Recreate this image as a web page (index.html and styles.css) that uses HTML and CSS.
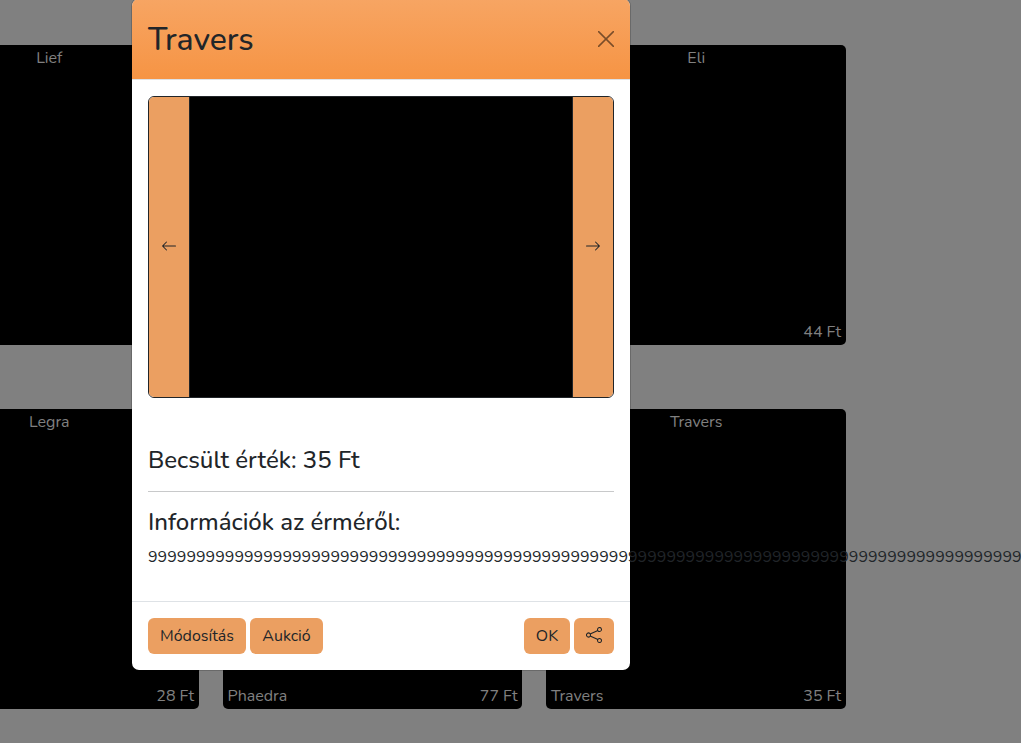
FILE: index.html
```html
<!DOCTYPE html>
<html lang="hu">
<head>
<meta charset="utf-8">
<title>Travers</title>
<link rel="stylesheet" href="styles.css">
</head>
<body>
<main class="gallery">
  <article class="coin"><h2 class="coin-title">Lief</h2></article>
  <article class="coin"></article>
  <article class="coin"><h2 class="coin-title">Eli</h2><div class="coin-foot"><span></span><span>44 Ft</span></div></article>
  <article class="coin"><h2 class="coin-title">Legra</h2><div class="coin-foot"><span></span><span>28 Ft</span></div></article>
  <article class="coin"><div class="coin-foot"><span>Phaedra</span><span>77 Ft</span></div></article>
  <article class="coin"><h2 class="coin-title">Travers</h2><div class="coin-foot"><span>Travers</span><span>35 Ft</span></div></article>
</main>
<section class="modal" role="dialog">
  <header class="modal-header">
    <h1 class="modal-title">Travers</h1>
    <button class="close" aria-label="Close"><svg width="16" height="16" viewBox="0 0 16 16"><path d="M.6.6l14.8 14.8M15.4.6L.6 15.4" fill="none" stroke="currentColor" stroke-width="1.5" stroke-linecap="round"/></svg></button>
  </header>
  <div class="modal-body">
    <div class="viewer">
      <button class="nav prev" aria-label="Previous"><svg width="16" height="16" viewBox="0 0 16 16" fill="currentColor"><path fill-rule="evenodd" d="M15 8a.5.5 0 0 0-.5-.5H2.707l3.147-3.146a.5.5 0 1 0-.708-.708l-4 4a.5.5 0 0 0 0 .708l4 4a.5.5 0 0 0 .708-.708L2.707 8.5H14.5A.5.5 0 0 0 15 8z"/></svg></button>
      <div class="image"></div>
      <button class="nav next" aria-label="Next"><svg width="16" height="16" viewBox="0 0 16 16" fill="currentColor"><path fill-rule="evenodd" d="M1 8a.5.5 0 0 1 .5-.5h11.793l-3.147-3.146a.5.5 0 0 1 .708-.708l4 4a.5.5 0 0 1 0 .708l-4 4a.5.5 0 0 1-.708-.708L13.293 8.5H1.5A.5.5 0 0 1 1 8z"/></svg></button>
    </div>
    <h2 class="value">Becsült érték: 35 Ft</h2>
    <hr class="rule">
    <h2 class="info-title">Információk az érméről:</h2>
    <p class="info">9999999999999999999999999999999999999999999999999999999999999999999999999999999999999999999</p>
  </div>
  <footer class="modal-footer">
    <button class="btn edit">Módosítás</button>
    <button class="btn auction">Aukció</button>
    <button class="btn ok">OK</button>
    <button class="btn share" aria-label="Share"><svg width="16" height="16" viewBox="0 0 16 16" fill="currentColor"><path d="M13.5 1a1.5 1.5 0 1 0 0 3 1.5 1.5 0 0 0 0-3zM11 2.5a2.5 2.5 0 1 1 .603 1.628l-6.718 3.12a2.499 2.499 0 0 1 0 1.504l6.718 3.12a2.5 2.5 0 1 1-.488.876l-6.718-3.12a2.5 2.5 0 1 1 0-3.256l6.718-3.12A2.5 2.5 0 0 1 11 2.5zm-8.5 4a1.5 1.5 0 1 0 0 3 1.5 1.5 0 0 0 0-3zm11 5.5a1.5 1.5 0 1 0 0 3 1.5 1.5 0 0 0 0-3z"/></svg></button>
  </footer>
</section>
</body>
</html>
```
FILE: styles.css
```css
* { box-sizing: border-box; }
body {
  margin: 0;
  height: 743px;
  overflow: hidden;
  background: #808080;
  color: #212529;
  font: 400 16px/24px Nunito, "Noto Sans", sans-serif;
}
h1, h2, p { margin: 0; font-weight: 400; }
button { font: inherit; color: inherit; border: 0; padding: 0; margin: 0; }
svg { display: block; }

.gallery {
  display: grid;
  grid-template-columns: repeat(3, 299.5px);
  grid-auto-rows: 300px;
  gap: 64px 24px;
  margin-left: -101px;
  padding-top: 45px;
}
.coin {
  display: flex;
  flex-direction: column;
  background: #000;
  color: #808080;
  border-radius: 5px;
}
.coin-title { padding: 1px 0 0 1px; font-size: 16px; line-height: 24px; text-align: center; }
.coin-foot {
  display: flex;
  justify-content: space-between;
  margin-top: auto;
  padding: 0 4.5px 1px 5px;
}

.modal {
  position: absolute;
  left: 131px;
  top: -2px;
  width: 500px;
  height: 673px;
  display: flex;
  flex-direction: column;
  background: #fff;
  background-clip: padding-box;
  border: 1px solid rgba(0, 0, 0, .175);
  border-radius: 8px;
}
.modal-header {
  display: flex;
  align-items: center;
  justify-content: space-between;
  height: 81px;
  padding: 0 16px;
  border-bottom: 1px solid #dee2e6;
  border-radius: 7px 7px 0 0;
  background: linear-gradient(#f7a563, #f69444);
}
.modal-title { padding-top: 2px; font-size: 32px; line-height: 40px; font-weight: 500; }
.close { background: none; opacity: .5; color: #000; }
.modal-body { height: 521px; padding: 16px; }
.viewer {
  display: flex;
  height: 302px;
  border: 1px solid #212529;
  border-radius: 6px;
  overflow: hidden;
}
.nav { width: 40px; display: grid; place-items: center; background: #eb9f61; }
.nav svg { margin-bottom: 2px; }
.image { flex: 1; background: #000; border: solid #212529; border-width: 0 1px; }
.value { margin-top: 48px; font-size: 24px; line-height: 29px; font-weight: 500; }
.rule { margin: 16px 0; border: 0; border-top: 1px solid #c8c9ca; }
.info-title { font-size: 24px; line-height: 29px; margin-bottom: 8px; font-weight: 500; }
.info { white-space: nowrap; line-height: 24px; }
.modal-footer {
  flex: 1;
  display: flex;
  align-items: flex-start;
  gap: 4px;
  padding: 16px;
  border-top: 1px solid #dee2e6;
}
.btn { height: 36px; border-radius: 6px; background: #eb9f61; white-space: nowrap; display: grid; place-items: center; }
.edit { width: 98px; }
.auction { width: 73px; }
.ok { width: 46px; margin-left: auto; }
.share { width: 40px; }
.share svg { margin-bottom: 2px; }
```
